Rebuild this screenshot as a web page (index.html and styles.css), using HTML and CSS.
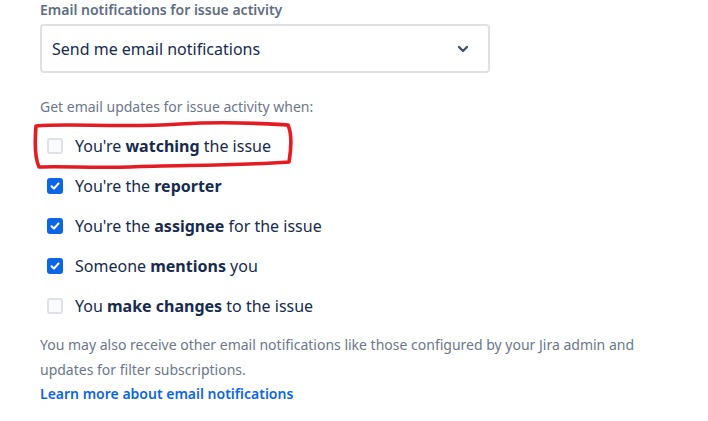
FILE: index.html
```html
<!DOCTYPE html>
<html>
<head>
<meta charset="utf-8">
<link rel="stylesheet" href="styles.css">
</head>
<body>
<div class="page">
  <div class="field-label">Email notifications for issue activity</div>
  <div class="select">
    <span class="select-text">Send me email notifications</span>
    <svg class="chev" width="14" height="10" viewBox="0 0 14 10"><path d="M3 3 L7 7 L11 3" fill="none" stroke="#42526e" stroke-width="2.4" stroke-linecap="round" stroke-linejoin="round"/></svg>
  </div>
  <div class="hint">Get email updates for issue activity when:</div>
  <div class="options">
    <div class="option highlighted">
      <span class="box"></span>
      <span class="opt-text">You're <b>watching</b> the issue</span>
      <svg class="annot" width="268" height="52" viewBox="0 0 268 52"><path d="M6 6 C 40 3, 90 8, 150 4 C 200 1, 240 4, 258 5 C 262 14, 261 30, 259 42 C 200 46, 150 45, 100 47 C 60 48, 30 46, 9 47 C 4 36, 5 18, 6 6 Z" fill="none" stroke="#e41b23" stroke-width="3.6" stroke-linejoin="round"/></svg>
    </div>
    <div class="option">
      <span class="box checked"><svg width="16" height="16" viewBox="0 0 16 16"><path d="M4.5 8.2 L7 10.5 L11.5 5.5" fill="none" stroke="#fff" stroke-width="2" stroke-linecap="round" stroke-linejoin="round"/></svg></span>
      <span class="opt-text">You're the <b>reporter</b></span>
    </div>
    <div class="option">
      <span class="box checked"><svg width="16" height="16" viewBox="0 0 16 16"><path d="M4.5 8.2 L7 10.5 L11.5 5.5" fill="none" stroke="#fff" stroke-width="2" stroke-linecap="round" stroke-linejoin="round"/></svg></span>
      <span class="opt-text">You're the <b>assignee</b> for the issue</span>
    </div>
    <div class="option">
      <span class="box checked"><svg width="16" height="16" viewBox="0 0 16 16"><path d="M4.5 8.2 L7 10.5 L11.5 5.5" fill="none" stroke="#fff" stroke-width="2" stroke-linecap="round" stroke-linejoin="round"/></svg></span>
      <span class="opt-text">Someone <b>mentions</b> you</span>
    </div>
    <div class="option">
      <span class="box"></span>
      <span class="opt-text">You <b>make changes</b> to the issue</span>
    </div>
  </div>
  <p class="note">You may also receive other email notifications like those configured by your Jira admin and updates for filter subscriptions.</p>
  <a class="learn" href="#">Learn more about email notifications</a>
</div>
</body>
</html>
```

FILE: styles.css
```css
html, body {
  margin: 0;
  padding: 0;
  background: #ffffff;
}
body {
  font-family: "Noto Sans", "Open Sans", sans-serif;
  color: #172b4d;
}
.page {
  padding: 0 40px;
  width: 449px;
  display: flex;
  flex-direction: column;
}
.field-label {
  font-size: 14px;
  font-weight: 600;
  color: #5e6c84;
  line-height: 20px;
  height: 24px;
}
.select {
  box-sizing: border-box;
  height: 49px;
  border: 2px solid #dfe1e6;
  border-radius: 4px;
  display: flex;
  align-items: center;
  justify-content: space-between;
  padding: 0 18px 0 10px;
  width: 450px;
}
.select-text {
  font-size: 16px;
  color: #172b4d;
}
.chev { display: block; }
.hint {
  margin-top: 24px;
  font-size: 14px;
  color: #6b778c;
  line-height: 20px;
}
.options {
  display: flex;
  flex-direction: column;
  margin-top: 9px;
}
.option {
  position: relative;
  height: 40px;
  display: flex;
  align-items: center;
  padding-left: 7px;
}
.box {
  box-sizing: border-box;
  width: 16px;
  height: 16px;
  border-radius: 3px;
  border: 2px solid #dfe1e6;
  background: #fafbfc;
  margin-right: 12px;
  display: flex;
  align-items: center;
  justify-content: center;
  flex: none;
}
.box.checked {
  background: #0c66e4;
  border: none;
}
.box svg { display: block; }
.opt-text {
  font-size: 16px;
  color: #172b4d;
}
.opt-text b { font-weight: 700; }
.annot {
  position: absolute;
  left: -10px;
  top: -6px;
  pointer-events: none;
}
.note {
  margin: 6px 0 0;
  font-size: 14px;
  line-height: 25px;
  color: #6b778c;
  width: 640px;
}
.learn {
  font-size: 14px;
  font-weight: 600;
  color: #0c66e4;
  text-decoration: none;
  line-height: 24px;
}
```
